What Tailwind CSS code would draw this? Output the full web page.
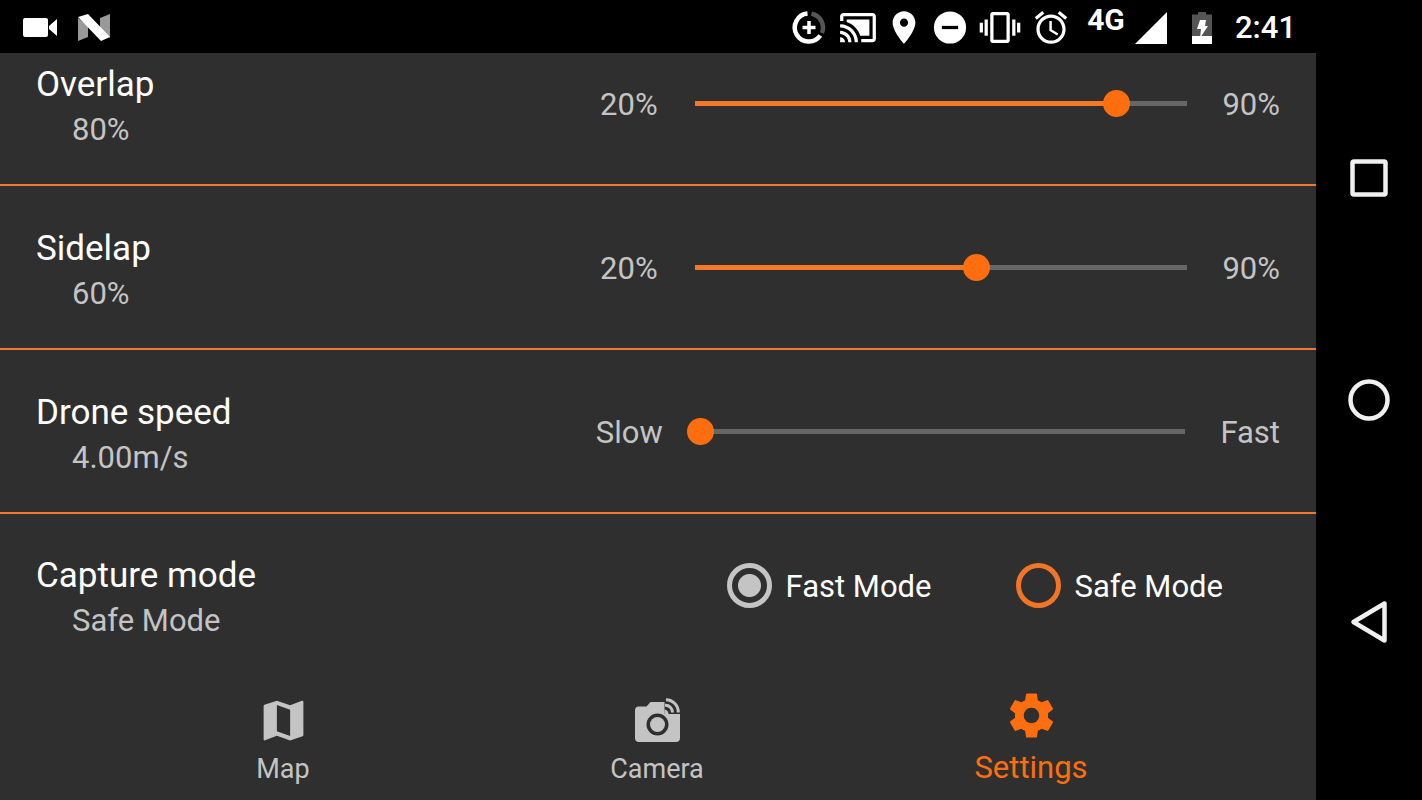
<!DOCTYPE html>
<html lang="en">
<head>
<meta charset="utf-8">
<meta name="viewport" content="width=device-width, initial-scale=1">
<title>Settings</title>
<script src="https://cdn.jsdelivr.net/npm/@tailwindcss/browser@4"></script>
</head>
<body class="flex h-screen bg-black font-['Roboto',sans-serif] text-white overflow-hidden">
<div class="flex min-w-0 flex-1 flex-col">
  <header class="flex h-[53px] shrink-0 items-center justify-between pt-0.5 pl-[22px] pr-5">
    <div class="flex items-center gap-5">
      <svg class="h-5 w-9" viewBox="0 0 36 20" fill="#fff" aria-hidden="true"><path d="M3 0h21q2 0 2 2v15q0 2-2 2H3q-2 0-2-2V2q0-2 2-2zM35 1v17l-8-7V8z"/></svg>
      <svg class="h-7 w-8" viewBox="0 0 32 28" aria-hidden="true"><path fill="#999" d="M0 4l10 8v11L0 27zM22 4l10-4v24l-10-9z"/><path fill="#fff" d="M0 3l10-3 22 23-9 4z"/></svg>
    </div>
    <div class="flex items-center">
      <svg class="h-[39px] w-12" viewBox="0 0 39 39" fill="none" aria-hidden="true"><path d="M22 5.800A14 14 0 0 1 32.400 25" stroke="#555" stroke-width="4.500"/><path d="M18 5.600A14 14 0 1 0 30.800 27.500" stroke="#fff" stroke-width="4.500"/><path d="M19.500 13v13M13 19.500h13" stroke="#fff" stroke-width="3.500"/></svg>
      <svg class="h-[39px] w-[50px]" viewBox="0 0 24 24" fill="#fff" aria-hidden="true"><path d="M1 18v3h3c0-1.660-1.340-3-3-3zm0-4v2c2.760 0 5 2.240 5 5h2c0-3.870-3.130-7-7-7zm18-7H5v1.630c3.960 1.280 7.090 4.410 8.370 8.370H19V7zM1 10v2c4.970 0 9 4.030 9 9h2c0-6.080-4.930-11-11-11zm20-7H3c-1.100 0-2 .9-2 2v3h2V5h18v14h-7v2h7c1.100 0 2-.9 2-2V5c0-1.100-.9-2-2-2z"/></svg>
      <svg class="h-[39px] w-[42px]" viewBox="0 0 24 24" fill="#fff" aria-hidden="true"><path d="M12 2C8.130 2 5 5.130 5 9c0 5.250 7 13 7 13s7-7.750 7-13c0-3.870-3.130-7-7-7zm0 9.500c-1.380 0-2.500-1.120-2.500-2.500s1.120-2.500 2.500-2.500 2.500 1.120 2.500 2.500-1.120 2.500-2.500 2.500z"/></svg>
      <svg class="h-[39px] w-[50px]" viewBox="0 0 24 24" aria-hidden="true"><circle cx="12" cy="12" r="9.900" fill="#fff"/><path fill="#000" d="M7 11h10v2H7z"/></svg>
      <svg class="h-[39px] w-[50px] overflow-visible" viewBox="0 0 24 24" fill="#fff" aria-hidden="true"><path d="M-.5 15h2V9h-2v6zM2.500 17h2V7h-2v10zM22.500 9v6h2V9h-2zM19.500 17h2V7h-2v10zM16.500 2.500h-9C6.670 2.500 6 3.170 6 4v16c0 .83.670 1.500 1.500 1.500h9c.83 0 1.500-.67 1.500-1.500V4c0-.83-.67-1.500-1.500-1.500zm-.5 17H8v-15h8v15z"/></svg>
      <svg class="h-[39px] w-[52px]" viewBox="0 0 24 24" fill="#fff" aria-hidden="true"><path d="M22 5.720l-4.600-3.860-1.290 1.530 4.600 3.860L22 5.720zM7.880 3.390L6.600 1.860 2 5.710l1.290 1.530 4.590-3.850zM12.500 8H11v6l4.750 2.850.75-1.230-4-2.370V8zM12 4c-4.970 0-9 4.030-9 9s4.020 9 9 9c4.970 0 9-4.030 9-9s-4.030-9-9-9zm0 16c-3.870 0-7-3.130-7-7s3.130-7 7-7 7 3.130 7 7-3.130 7-7 7z"/></svg>
      <span class="w-[58px] self-start text-center text-[30px] leading-[36px] font-bold">4G</span>
      <svg class="h-8 w-8" viewBox="0 0 32 32" fill="#fff" aria-hidden="true"><path d="M32 0v32H0z"/></svg>
      <svg class="ml-6 h-8 w-[22px]" viewBox="0 0 22 32" aria-hidden="true"><path fill="#555" d="M7 0h8v2.500h6V24H1V2.500h6z"/><path fill="#fff" d="M1 24h20v8H1zM9 8h6l-1 6h3L9 26l1-9H6z"/></svg>
      <time class="ml-[22px] text-[31px] leading-[51px] font-medium">2:41</time>
    </div>
  </header>

  <main class="min-h-0 flex-1 overflow-hidden bg-[#2f2f2f] text-[31px] text-[#c4c4c4]">
    <section class="-mt-[31px] flex h-[164px] items-center justify-between border-b-2 border-[#f07830] px-9">
      <div class="pt-[7px]">
        <h2 class="text-[35px] leading-[46px] text-white" id="overlap">Overlap</h2>
        <p class="pl-9 leading-[44px]">80%</p>
      </div>
      <div class="flex w-[55%] items-center gap-5">
        <span class="w-[66px] pt-1 text-center">20%</span>
        <input type="range" min="20" max="90" value="80" aria-labelledby="overlap" style="--fill:85.7%" class="h-8 min-w-0 flex-1 appearance-none bg-[linear-gradient(to_right,#f5782a_var(--fill),#666_var(--fill))] bg-[length:calc(100%_-_26px)_5px] bg-center bg-no-repeat [&::-webkit-slider-thumb]:size-[27px] [&::-webkit-slider-thumb]:appearance-none [&::-webkit-slider-thumb]:rounded-full [&::-webkit-slider-thumb]:bg-[#ff6e0e]">
        <span class="pt-1 pl-0.5">90%</span>
      </div>
    </section>
    <section class="flex h-[164px] items-center justify-between border-b-2 border-[#f07830] px-9">
      <div class="pt-[7px]">
        <h2 class="text-[35px] leading-[46px] text-white" id="sidelap">Sidelap</h2>
        <p class="pl-9 leading-[44px]">60%</p>
      </div>
      <div class="flex w-[55%] items-center gap-5">
        <span class="w-[66px] pt-1 text-center">20%</span>
        <input type="range" min="20" max="90" value="60" aria-labelledby="sidelap" style="--fill:57.1%" class="h-8 min-w-0 flex-1 appearance-none bg-[linear-gradient(to_right,#f5782a_var(--fill),#666_var(--fill))] bg-[length:calc(100%_-_26px)_5px] bg-center bg-no-repeat [&::-webkit-slider-thumb]:size-[27px] [&::-webkit-slider-thumb]:appearance-none [&::-webkit-slider-thumb]:rounded-full [&::-webkit-slider-thumb]:bg-[#ff6e0e]">
        <span class="pt-1 pl-0.5">90%</span>
      </div>
    </section>
    <section class="flex h-[164px] items-center justify-between border-b-2 border-[#f07830] px-9">
      <div class="pt-[7px]">
        <h2 class="text-[35px] leading-[46px] text-white" id="speed">Drone speed</h2>
        <p class="pl-9 leading-[44px]">4.00m/s</p>
      </div>
      <div class="flex w-[55%] items-center gap-5">
        <span class="w-[66px] pt-1 text-center">Slow</span>
        <input type="range" min="0" max="100" value="1" aria-labelledby="speed" style="--fill:1%" class="h-8 min-w-0 flex-1 appearance-none bg-[linear-gradient(to_right,#f5782a_var(--fill),#666_var(--fill))] bg-[length:calc(100%_-_26px)_5px] bg-center bg-no-repeat [&::-webkit-slider-thumb]:size-[27px] [&::-webkit-slider-thumb]:appearance-none [&::-webkit-slider-thumb]:rounded-full [&::-webkit-slider-thumb]:bg-[#ff6e0e]">
        <span class="pt-1 pl-0.5">Fast</span>
      </div>
    </section>
    <section class="flex h-[161px] items-center justify-between pl-9 pr-[93px]">
      <div class="pt-[7px]">
        <h2 class="text-[35px] leading-[46px] text-white" id="mode">Capture mode</h2>
        <p class="pl-9 leading-[44px]">Safe Mode</p>
      </div>
      <div role="radiogroup" aria-labelledby="mode" class="flex gap-[84px] pb-[18px] text-white">
        <label class="flex items-center gap-3.5"><input type="radio" name="mode" checked class="size-[45px] appearance-none rounded-full border-5 border-[#c4c4c4] checked:bg-[radial-gradient(circle,#c4c4c4_11px,transparent_12px)]"><span class="pt-1">Fast Mode</span></label>
        <label class="flex items-center gap-3.5"><input type="radio" name="mode" class="size-[45px] appearance-none rounded-full border-5 border-[#f27427] checked:bg-[radial-gradient(circle,#f27427_11px,transparent_12px)]"><span class="pt-1">Safe Mode</span></label>
      </div>
    </section>
  </main>

  <nav class="grid h-[124px] shrink-0 grid-cols-3 bg-[#2f2f2f] pl-24 pr-[98px] text-[27px] text-[#c4c4c4]" aria-label="Main">
    <a href="#map" class="flex flex-col items-center pt-[18px]">
      <svg class="size-[53px]" viewBox="0 0 24 24" fill="currentColor" aria-hidden="true"><path d="M20.500 3l-.16.030L15 5.100 9 3 3.360 4.900c-.21.070-.36.250-.36.480V20.500c0 .28.220.5.500.5l.16-.03L9 18.900l6 2.100 5.640-1.900c.21-.07.360-.25.360-.48V3.500c0-.28-.22-.5-.5-.5zM15 19l-6-2.110V5l6 2.110V19z"/></svg>
      <span class="leading-[44px]">Map</span>
    </a>
    <a href="#camera" class="flex flex-col items-center pt-[18px]">
      <svg class="size-[53px]" viewBox="0 0 53 53" fill="currentColor" aria-hidden="true"><path fill-rule="evenodd" d="M8 12.500h7.500l4-4.500H33.500v12H49v24q0 4-4 4H8q-4 0-4-4V16.500q0-4 4-4zM26.500 19.500a11 11 0 1 0 0 22a11 11 0 1 0 0-22z"/><circle cx="26.500" cy="30.500" r="7.500"/><g fill="none" stroke="currentColor"><path d="M35 5.700A12.500 12.500 0 0 1 47.300 18.500" stroke-width="3"/><path d="M34 11.300A7 7 0 0 1 41.500 18.500" stroke-width="3"/></g><path d="M33.500 15.500a4.500 4.500 0 0 1 4 5h-4z"/></svg>
      <span class="leading-[44px]">Camera</span>
    </a>
    <a href="#settings" aria-current="page" class="flex flex-col items-center pt-[13px] text-[31px] text-[#ff6e0e]">
      <svg class="size-[53px]" viewBox="0 0 24 24" fill="currentColor" aria-hidden="true"><path d="M19.430 12.980c.04-.32.070-.64.070-.98s-.03-.66-.07-.98l2.110-1.650c.19-.15.240-.42.120-.64l-2-3.460c-.12-.22-.39-.3-.61-.22l-2.490 1c-.52-.4-1.080-.73-1.690-.98l-.38-2.650C14.460 2.180 14.250 2 14 2h-4c-.25 0-.46.180-.49.420l-.38 2.650c-.61.250-1.170.590-1.690.980l-2.490-1c-.23-.09-.49 0-.61.220l-2 3.460c-.13.220-.07.490.12.640l2.110 1.650c-.04.320-.07.650-.07.980s.03.660.07.980l-2.110 1.650c-.19.150-.24.420-.12.640l2 3.460c.12.220.39.300.61.220l2.490-1c.52.400 1.080.730 1.690.980l.38 2.650c.03.240.24.420.49.420h4c.25 0 .46-.18.490-.42l.38-2.650c.61-.25 1.170-.59 1.690-.98l2.490 1c.23.090.49 0 .61-.22l2-3.460c.12-.22.070-.49-.12-.64l-2.110-1.650zM12 15.500c-1.930 0-3.500-1.570-3.500-3.500s1.570-3.500 3.500-3.500 3.500 1.570 3.500 3.500-1.570 3.500-3.500 3.500z"/></svg>
      <span class="leading-[52px]">Settings</span>
    </a>
  </nav>
</div>

<aside class="flex w-[106px] shrink-0 flex-col items-center justify-around py-[67px]" aria-label="System navigation">
  <button aria-label="Recent apps"><svg class="size-11" viewBox="0 0 44 44" fill="none" stroke="#f0f0f0" stroke-width="4.500"><rect x="5.500" y="5.500" width="33" height="33" rx="1.500"/></svg></button>
  <button aria-label="Home"><svg class="size-11" viewBox="0 0 44 44" fill="none" stroke="#f0f0f0" stroke-width="4.500"><circle cx="22" cy="22" r="18.500"/></svg></button>
  <button aria-label="Back"><svg class="size-11" viewBox="0 0 44 44" fill="none" stroke="#f0f0f0" stroke-width="4.500" stroke-linejoin="round"><path d="M37.500 3.500v37L6.500 22z"/></svg></button>
</aside>
</body>
</html>
